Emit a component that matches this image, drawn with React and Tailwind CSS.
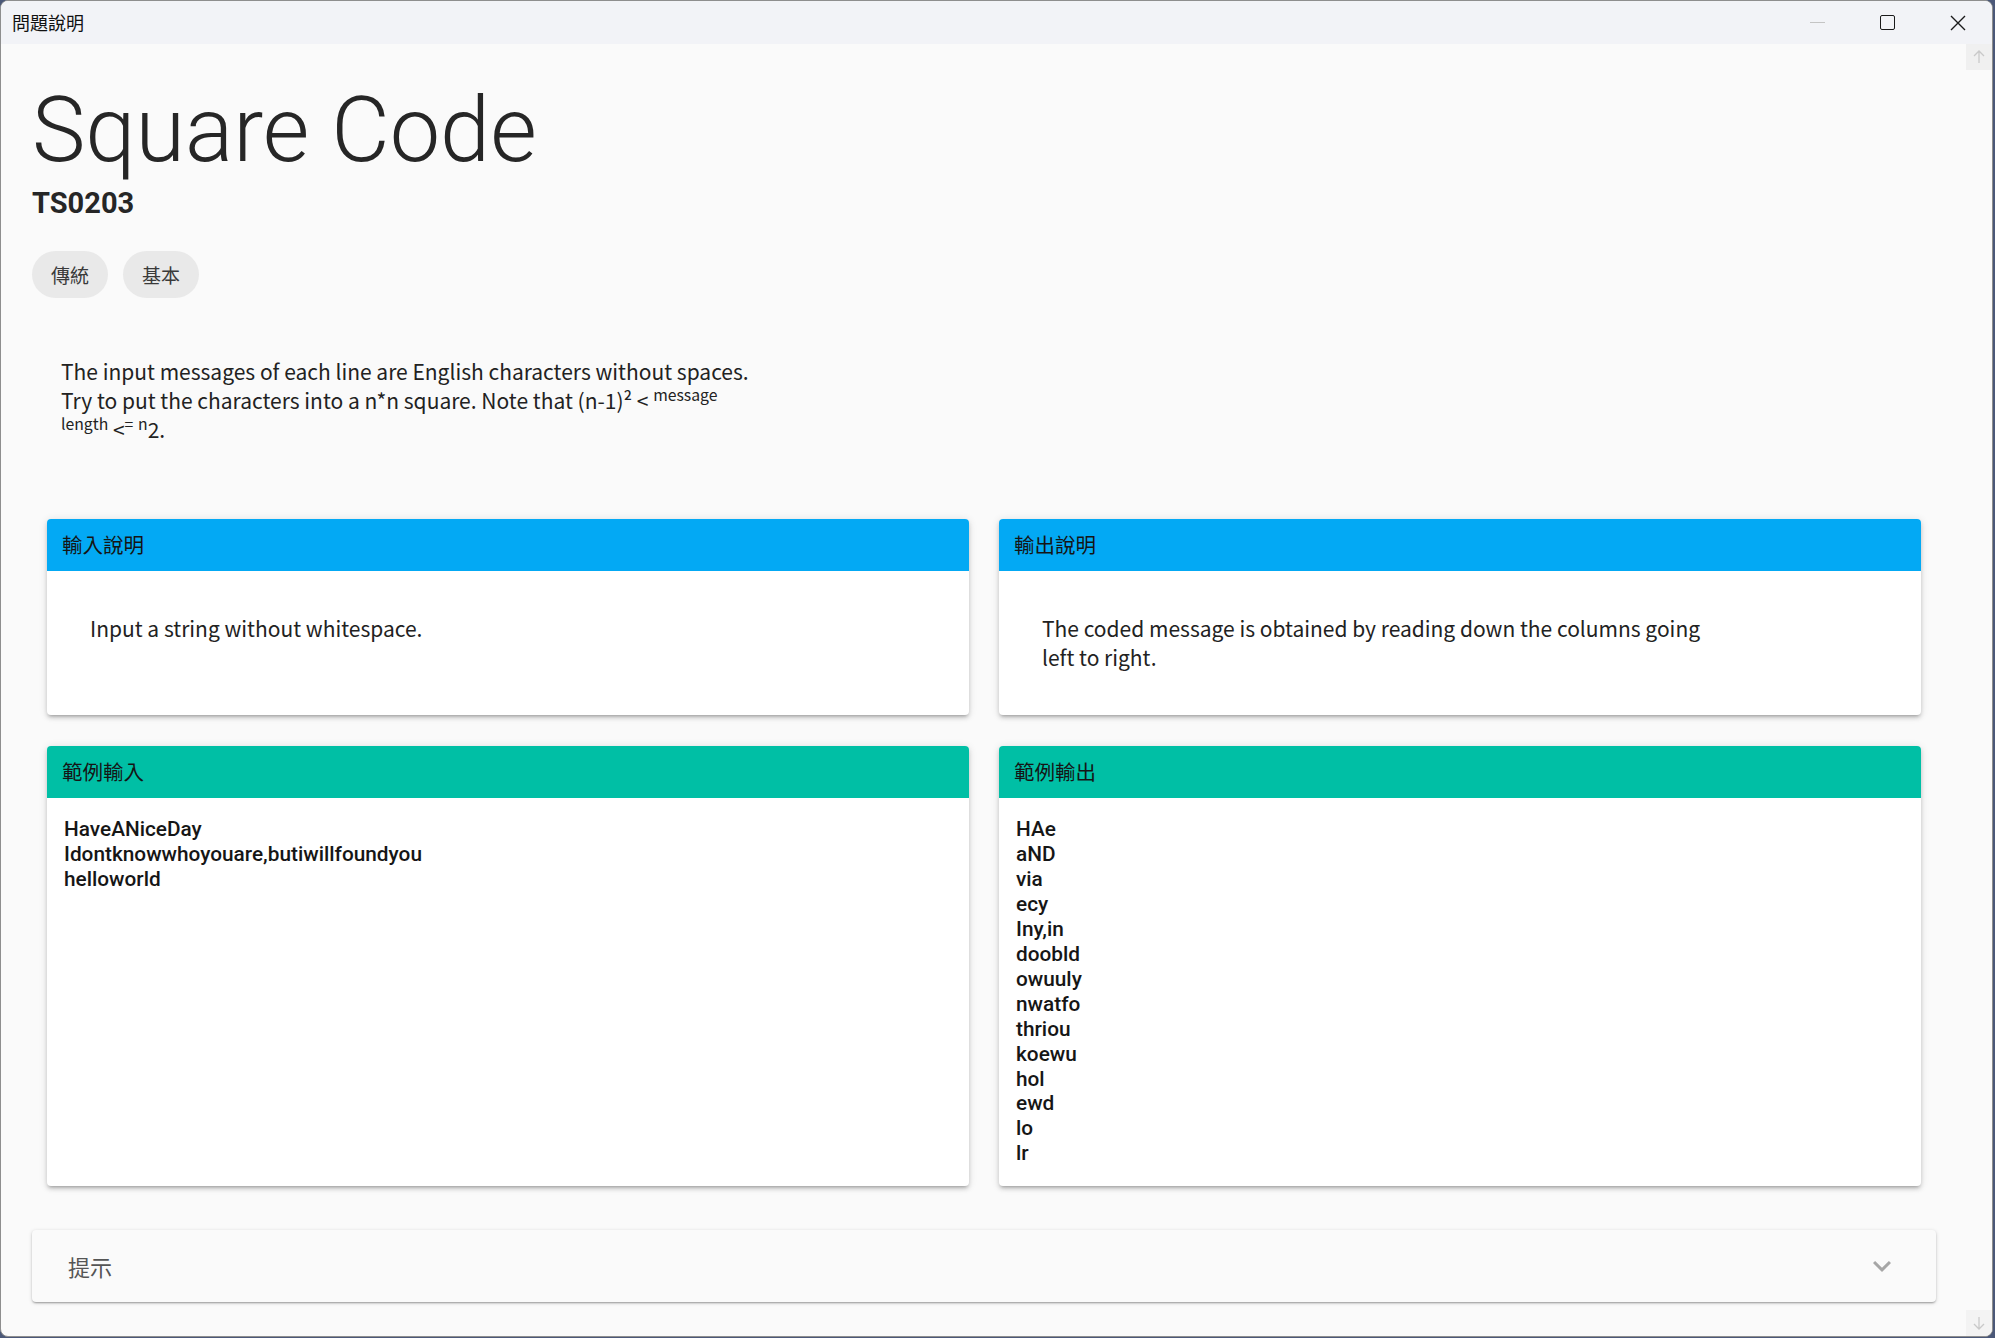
import React from 'react';

const SAMPLE_IN = ['HaveANiceDay', 'Idontknowwhoyouare,butiwillfoundyou', 'helloworld'];
const SAMPLE_OUT = ['HAe', 'aND', 'via', 'ecy', 'Iny,in', 'doobld', 'owuuly', 'nwatfo', 'thriou', 'koewu', 'hol', 'ewd', 'lo', 'lr'];

const Card = ({ title, head, children, body }) => (
  <div className="flex flex-col overflow-hidden rounded bg-white shadow-[0_3px_3px_-2px_rgba(0,0,0,0.2),0_3px_4px_0_rgba(0,0,0,0.14),0_1px_8px_0_rgba(0,0,0,0.12)]">
    <div className={`flex h-[52px] items-center px-[15px] pb-[2px] font-['Noto_Sans_CJK_TC',sans-serif] text-[20.5px] leading-none text-[#151515] ${head}`}>
      {title}
    </div>
    <div className={`flex-1 ${body}`}>{children}</div>
  </div>
);

const Chip = ({ label }) => (
  <span className="flex h-[47px] items-center rounded-full bg-[#e9e9e9] px-[19px] pb-px font-['Noto_Sans_CJK_TC',sans-serif] text-[19px] leading-none text-[#3a3a3a]">
    {label}
  </span>
);

const Lines = ({ items }) => (
  <div className="font-['Roboto',sans-serif] text-[20.8px] font-medium leading-[1.2] text-[#161616]">
    {items.map((s, i) => (
      <div key={i}>{s}</div>
    ))}
  </div>
);

export default function App() {
  return (
    <div className="h-[1338px] w-[1995px] bg-[#4b5878]">
      <div className="flex h-[1337px] w-[1993px] flex-col overflow-hidden rounded-[8px] border border-[#8e8e8e] bg-[#fafafa]">
        {/* title bar */}
        <div className="flex h-[43px] shrink-0 items-center bg-[#f2f3f7] font-['Noto_Sans_CJK_TC',sans-serif]">
          <span className="pl-[11px] text-[18px] text-[#111]">問題說明</span>
          <div className="ml-auto flex h-full items-center">
            <div className="flex w-[70px] justify-center">
              <span className="block h-px w-[15px] bg-[#c4c4c4]" />
            </div>
            <div className="flex w-[70px] justify-center">
              <span className="block h-[15px] w-[15px] rounded-[2px] border-[1.5px] border-[#1a1a1a]" />
            </div>
            <div className="flex w-[70px] justify-center pl-[2px]">
              <svg width="16" height="16" viewBox="0 0 16 16">
                <path d="M1 1 15 15M15 1 1 15" stroke="#1a1a1a" strokeWidth="1.4" />
              </svg>
            </div>
          </div>
        </div>

        <div className="flex min-h-0 flex-1">
          {/* page */}
          <div className="flex-1 pl-[31px] pr-[30px] pt-[42px]">
            <h1 className="font-['Roboto',sans-serif] text-[90px] font-light leading-none text-[#262626]">Square Code</h1>
            <div className="mt-[13px] font-['Roboto',sans-serif] text-[29px] font-bold leading-none text-[#262626]">TS0203</div>

            <div className="mt-[33px] flex gap-[15px]">
              <Chip label="傳統" />
              <Chip label="基本" />
            </div>

            <div className="mt-[59px] pl-[29px]">
              <p className="max-w-[697px] font-['Noto_Sans_CJK_TC',sans-serif] text-[21px] leading-[29px] text-[#222]">
                The input messages of each line are English characters without spaces. Try to put the characters into
                a n*n square. Note that (n-1)² &lt; <sup>message length</sup> &lt;<sup>=</sup> <sup>n</sup>2.
              </p>
            </div>

            <div className="mx-[15px] mt-[75px] grid grid-cols-2 gap-x-[30px] gap-y-[31px]">
              <Card title="輸入說明" head="bg-[#03a9f4]" body="px-[43px] py-[43px]">
                <p className="max-w-[680px] font-['Noto_Sans_CJK_TC',sans-serif] text-[21px] leading-[29px] text-[#222]">
                  Input a string without whitespace.
                </p>
              </Card>
              <Card title="輸出說明" head="bg-[#03a9f4]" body="px-[43px] py-[43px]">
                <p className="max-w-[680px] font-['Noto_Sans_CJK_TC',sans-serif] text-[21px] leading-[29px] text-[#222]">
                  The coded message is obtained by reading down the columns going left to right.
                </p>
              </Card>
              <Card title="範例輸入" head="bg-[#00bfa5]" body="px-[17px] pb-[20px] pt-[19px]">
                <Lines items={SAMPLE_IN} />
              </Card>
              <Card title="範例輸出" head="bg-[#00bfa5]" body="px-[17px] pb-[20px] pt-[19px]">
                <Lines items={SAMPLE_OUT} />
              </Card>
            </div>

            <div className="mt-[44px] flex h-[72px] items-center rounded bg-[#fafafa] px-[36px] shadow-[0_2px_2px_-1px_rgba(0,0,0,0.2),0_1px_2px_0_rgba(0,0,0,0.14),0_1px_4px_0_rgba(0,0,0,0.14)]">
              <span className="font-['Noto_Sans_CJK_TC',sans-serif] text-[22px] text-[#555]">提示</span>
              <svg className="ml-auto" width="36" height="36" viewBox="0 0 24 24">
                <path d="M16.59 8.59 12 13.17 7.41 8.59 6 10l6 6 6-6z" fill="#a6a6a6" />
              </svg>
            </div>
          </div>

          {/* scrollbar */}
          <div className="flex w-[26px] shrink-0 flex-col justify-between">
            <div className="flex h-[26px] items-center justify-center bg-[#f0f0f0]">
              <svg width="12" height="14" viewBox="0 0 12 14">
                <path d="M6 13V1M1 6l5-5 5 5" stroke="#c9c9c9" strokeWidth="1.3" fill="none" />
              </svg>
            </div>
            <div className="flex h-[26px] items-center justify-center bg-[#f3f3f3]">
              <svg width="12" height="14" viewBox="0 0 12 14">
                <path d="M6 1v12M1 8l5 5 5-5" stroke="#c9c9c9" strokeWidth="1.3" fill="none" />
              </svg>
            </div>
          </div>
        </div>
      </div>
    </div>
  );
}
